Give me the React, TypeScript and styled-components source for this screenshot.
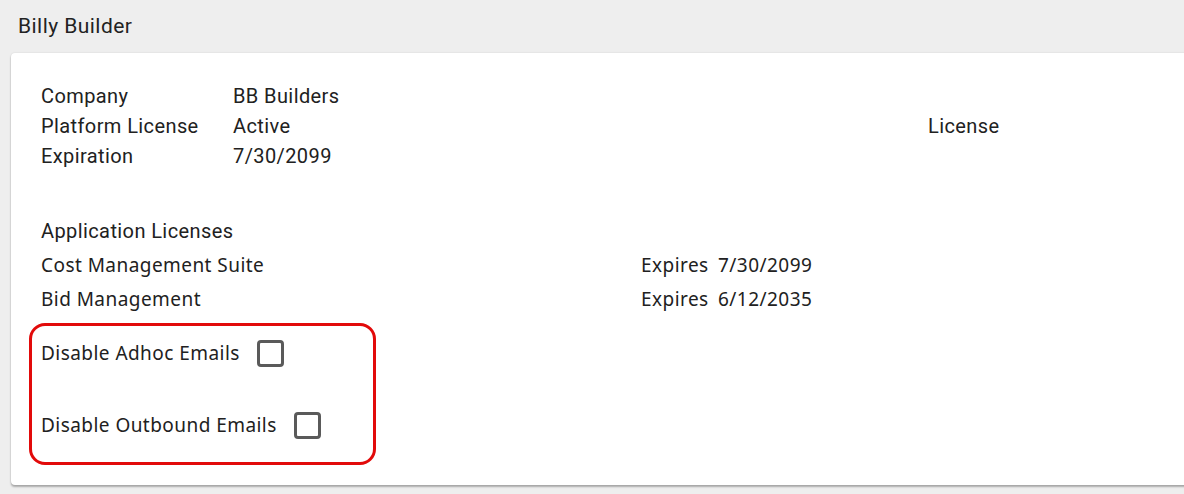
import styled, { createGlobalStyle } from "styled-components";

const GlobalStyle = createGlobalStyle`
  html, body {
    margin: 0;
    padding: 0;
    background: #eeeeee;
    overflow: hidden;
  }
  body {
    font-family: Roboto, "Liberation Sans", sans-serif;
    color: #212121;
  }
`;

const licenses = [
  { name: "Cost Management Suite", expires: "7/30/2099" },
  { name: "Bid Management", expires: "6/12/2035" },
];

const options = [
  { label: "Disable Adhoc Emails", checked: false },
  { label: "Disable Outbound Emails", checked: false },
];

export default function App() {
  return (
    <Page>
      <GlobalStyle />
      <Header>Billy Builder</Header>
      <Card>
        <InfoGrid>
          <Label>Company</Label>
          <Value>BB Builders</Value>
          <Extra />
          <Label>Platform License</Label>
          <Value>Active</Value>
          <Extra>License</Extra>
          <Label>Expiration</Label>
          <Value>7/30/2099</Value>
          <Extra />
        </InfoGrid>

        <SectionTitle>Application Licenses</SectionTitle>
        {licenses.map((l) => (
          <LicenseRow key={l.name}>
            <LicenseName>{l.name}</LicenseName>
            <Expires>Expires</Expires>
            <ExpiresDate>{l.expires}</ExpiresDate>
          </LicenseRow>
        ))}

        <Highlight>
          {options.map((o) => (
            <OptionRow key={o.label}>
              <OptionLabel>{o.label}</OptionLabel>
              <Checkbox type="checkbox" defaultChecked={o.checked} />
            </OptionRow>
          ))}
        </Highlight>
      </Card>
    </Page>
  );
}

const Page = styled.div`
  display: flex;
  flex-direction: column;
  height: 494px;
`;

const Header = styled.div`
  height: 53px;
  padding-left: 18px;
  box-sizing: border-box;
  display: flex;
  align-items: center;
  padding-bottom: 2px;
  font-size: 21px;
  letter-spacing: 0.45px;
  color: #222;
`;

const Card = styled.div`
  margin: 0 -20px 0 11px;
  background: #fff;
  border-radius: 4px;
  box-shadow: 0 2px 2px rgba(0, 0, 0, 0.28), 0 0 2px rgba(0, 0, 0, 0.12);
  padding: 28px 0 20px 30px;
  display: flex;
  flex-direction: column;
`;

const InfoGrid = styled.div`
  display: grid;
  grid-template-columns: 192px 695px auto;
  grid-auto-rows: 30px;
  align-items: center;
  font-size: 20px;
  letter-spacing: 0.4px;
`;

const Label = styled.div``;
const Value = styled.div``;
const Extra = styled.div``;

const SectionTitle = styled.div`
  margin-top: 43px;
  height: 34px;
  display: flex;
  align-items: center;
  font-size: 20px;
  letter-spacing: 0.4px;
`;

const LicenseRow = styled.div`
  display: flex;
  align-items: center;
  height: 34px;
  font-family: "Noto Sans", "Open Sans", sans-serif;
  font-size: 19px;
  letter-spacing: 0.45px;
`;

const LicenseName = styled.div`
  width: 600px;
`;

const Expires = styled.div`
  width: 77px;
`;

const ExpiresDate = styled.div``;

const Highlight = styled.div`
  margin: 7px 0 0 -12px;
  width: 347px;
  box-sizing: border-box;
  border: 3px solid #e20a0a;
  border-radius: 16px;
  padding: 9px 0 19px 9px;
  display: flex;
  flex-direction: column;
  gap: 36px;
`;

const OptionRow = styled.div`
  display: flex;
  align-items: center;
  gap: 17px;
  height: 36px;
`;

const OptionLabel = styled.div`
  font-family: "Noto Sans", "Open Sans", sans-serif;
  font-size: 19px;
  letter-spacing: 0.45px;
`;

const Checkbox = styled.input`
  appearance: none;
  margin: 0;
  width: 27px;
  height: 27px;
  box-sizing: border-box;
  border: 3px solid #5a5a5a;
  border-radius: 4px;
  background: #fff;
`;
